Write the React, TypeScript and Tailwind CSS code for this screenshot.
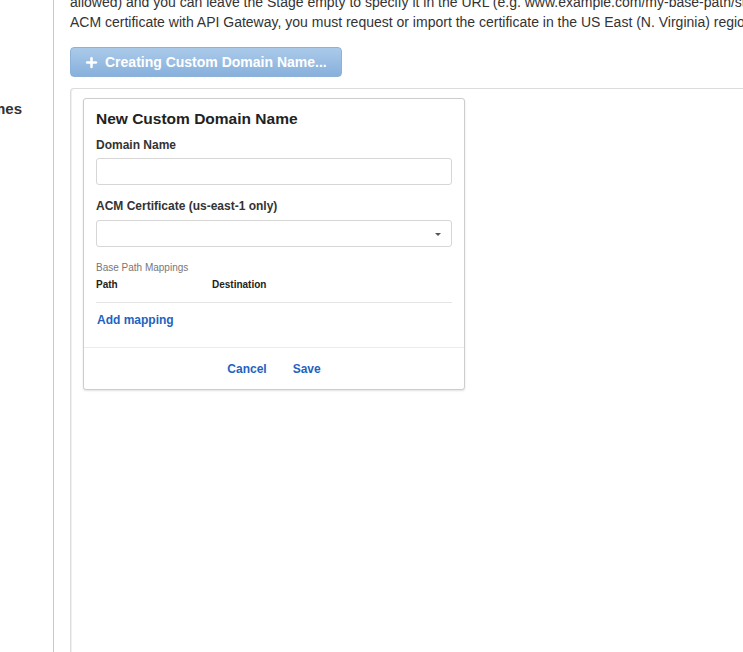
import { Plus } from 'lucide-react';

export default function App() {
  return (
    <div className="flex h-screen w-full overflow-hidden bg-white text-[#333] font-['Liberation_Sans',Arial,sans-serif]">
      {/* Sidebar (clipped) */}
      <div className="w-[54px] shrink-0 overflow-hidden border-r border-[#c8c8c8]">
        <div className="mt-[100px] flex justify-end whitespace-nowrap pr-[31px] text-[15px] font-bold leading-[18px]">
          Custom Domain Names
        </div>
      </div>

      {/* Main content */}
      <div className="flex min-w-0 flex-1 flex-col pl-[16px]">
        <div className="mt-[-8px] whitespace-nowrap text-[14px] leading-[20px]">
          <p>allowed) and you can leave the Stage empty to specify it in the URL (e.g. www.example.com/my-base-path/stage). To use an</p>
          <p>ACM certificate with API Gateway, you must request or import the certificate in the US East (N. Virginia) region.</p>
        </div>

        <div className="mt-[15px]">
          <button className="flex h-[30px] items-center gap-[6px] rounded-[4px] border border-[#8db2da] bg-gradient-to-b from-[#abcaea] to-[#87b0dc] pl-[13px] pr-[14px] text-[14px] font-bold text-white">
            <Plus size={15} strokeWidth={4} />
            Creating Custom Domain Name...
          </button>
        </div>

        <div className="mt-[11px] flex-1 rounded-tl-[4px] border-l border-t border-[#dcdcdc] shadow-[inset_1px_0_0_#f0f0f0]">
          <div className="ml-[12px] mt-[9px] w-[382px] rounded-[3px] border border-[#cdcdcd] bg-white shadow-[0_1px_2px_rgba(0,0,0,0.12)]">
            <div className="px-[12px] pt-[10px]">
              <h2 className="text-[15.5px] font-bold leading-[20px] text-[#222]">New Custom Domain Name</h2>

              <label className="mt-[8px] block text-[12px] font-bold leading-[16px]">Domain Name</label>
              <input
                type="text"
                className="mt-[5px] block h-[27px] w-full rounded-[3px] border border-[#d6d6d6] px-2 text-[12px] outline-none"
              />

              <label className="mt-[13px] block text-[12px] font-bold leading-[16px]">ACM Certificate (us-east-1 only)</label>
              <div className="relative mt-[6px] h-[27px] w-full rounded-[3px] border border-[#d6d6d6]">
                <span className="absolute right-[10px] top-[12px] h-0 w-0 border-x-[3px] border-t-[3px] border-x-transparent border-t-[#555]" />
              </div>

              <div className="mt-[14px] text-[10px] leading-[14px] text-[#777]">Base Path Mappings</div>
              <div className="mt-[3px] flex text-[10px] font-bold leading-[14px] text-[#222]">
                <span className="w-[116px]">Path</span>
                <span>Destination</span>
              </div>
              <div className="mt-[10px] border-t border-[#e4e4e4]" />

              <a className="mt-[9px] mb-[19px] block pl-[1px] text-[12px] font-bold leading-[16px] text-[#1e63c0]" href="#">
                Add mapping
              </a>
            </div>

            <div className="flex justify-center gap-[26px] border-t border-[#ececec] pt-[13px] pb-[12px] text-[12px] font-bold leading-[16px] text-[#1e63c0]">
              <a href="#">Cancel</a>
              <a href="#">Save</a>
            </div>
          </div>
        </div>
      </div>
    </div>
  );
}
